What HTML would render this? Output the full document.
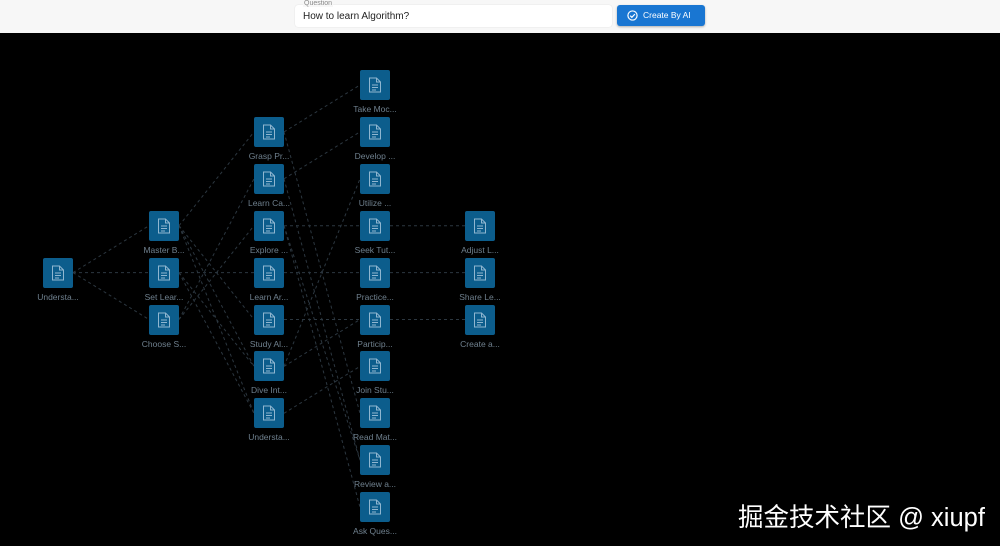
<!DOCTYPE html>
<html><head><meta charset="utf-8"><style>
body{margin:0;width:1000px;height:546px;background:#000;overflow:hidden;font-family:"Liberation Sans",sans-serif;position:relative}
.top{position:absolute;left:0;top:0;width:1000px;height:33px;background:#f7f7f7}
.inp{position:absolute;left:295px;top:5px;width:317px;height:22px;background:#fff;border-radius:3px;box-shadow:0 0 1px #ccc}
.inp .lb{position:absolute;left:8px;top:-5px;font-size:7px;color:#888;background:#f7f7f7;padding:0 1px}
.inp .t{position:absolute;left:8px;top:6px;font-size:10px;color:#222}
.btn{position:absolute;left:617px;top:5px;width:88px;height:21px;background:#1976d2;border-radius:3px;color:#fff;font-size:8.5px;line-height:21px;box-shadow:0 1px 2px rgba(0,0,0,.3)}
.btn svg{position:absolute;left:10px;top:5px}
.btn span{position:absolute;left:26px}
.n{position:absolute;width:30px;height:30px;background:#0c5d8c;border-radius:2px}
.n svg{position:absolute;left:8px;top:7px}
.l{position:absolute;width:70px;text-align:center;font-size:8.5px;color:#6f808e}
.wm{position:absolute;left:738px;top:497px;font-size:25.5px;color:#fff;font-family:"Liberation Sans","Noto Sans CJK SC",sans-serif}
</style></head><body>
<div class="top">
<div class="inp"><span class="lb">Question</span><span class="t">How to learn Algorithm?</span></div>
<div class="btn"><svg width="11" height="11" viewBox="0 0 12 12"><circle cx="6" cy="6" r="5" fill="none" stroke="#fff" stroke-width="1.3"/><path d="M3.5 6.2l1.8 1.8 3.3-3.5" fill="none" stroke="#fff" stroke-width="1.3"/></svg><span>Create By AI</span></div>
</div>
<svg style="position:absolute;left:0;top:0" width="1000" height="546" id="e"></svg>
<div id="nodes"></div>
<div class="wm">掘金技术社区 @ xiupf</div>
<script>
var cols=[58,164,269,375,480];
function Y(i){return 85+i*46.9;}
var N=[
[0,4,"Understa..."],
[1,3,"Master B..."],[1,4,"Set Lear..."],[1,5,"Choose S..."],
[2,1,"Grasp Pr..."],[2,2,"Learn Ca..."],[2,3,"Explore ..."],[2,4,"Learn Ar..."],[2,5,"Study Al..."],[2,6,"Dive Int..."],[2,7,"Understa..."],
[3,0,"Take Moc..."],[3,1,"Develop ..."],[3,2,"Utilize ..."],[3,3,"Seek Tut..."],[3,4,"Practice..."],[3,5,"Particip..."],[3,6,"Join Stu..."],[3,7,"Read Mat..."],[3,8,"Review a..."],[3,9,"Ask Ques..."],
[4,3,"Adjust L..."],[4,4,"Share Le..."],[4,5,"Create a..."]];
var E=[[0,4,1,3],[0,4,1,4],[0,4,1,5],
[1,3,2,1],[1,3,2,5],[1,3,2,6],[1,4,2,4],[1,4,2,7],[1,5,2,2],[1,5,2,3],[1,3,2,7],[1,4,2,6],
[2,1,3,0],[2,1,3,7],[2,2,3,1],[2,2,3,8],[2,3,3,3],[2,3,3,9],[2,4,3,4],[2,5,3,5],[2,6,3,2],[2,7,3,6],[2,6,3,5],[2,3,3,8],
[3,3,4,3],[3,4,4,4],[3,5,4,5]];
var s="";
E.forEach(function(e){s+='<line x1="'+(cols[e[0]]+15)+'" y1="'+Y(e[1])+'" x2="'+(cols[e[2]]-15)+'" y2="'+Y(e[3])+'" stroke="#2c3740" stroke-width="1" stroke-dasharray="3,3"/>';});
document.getElementById("e").innerHTML=s;
var h="";
N.forEach(function(n){var x=cols[n[0]],y=Y(n[1]);
h+='<div class="n" style="left:'+(x-15)+'px;top:'+(y-15)+'px"><svg width="14" height="16" viewBox="0 0 14 16"><path d="M1.5 1h7l4 4v10h-11z M8.5 1v4h4" fill="none" stroke="#8fb6d0" stroke-width="1"/><path d="M4 8h6M4 10.5h6M4 13h4" stroke="#8fb6d0" stroke-width="1"/></svg></div><div class="l" style="left:'+(x-35)+'px;top:'+(y+19)+'px">'+n[2]+'</div>';});
document.getElementById("nodes").innerHTML=h;
</script>
</body></html>
